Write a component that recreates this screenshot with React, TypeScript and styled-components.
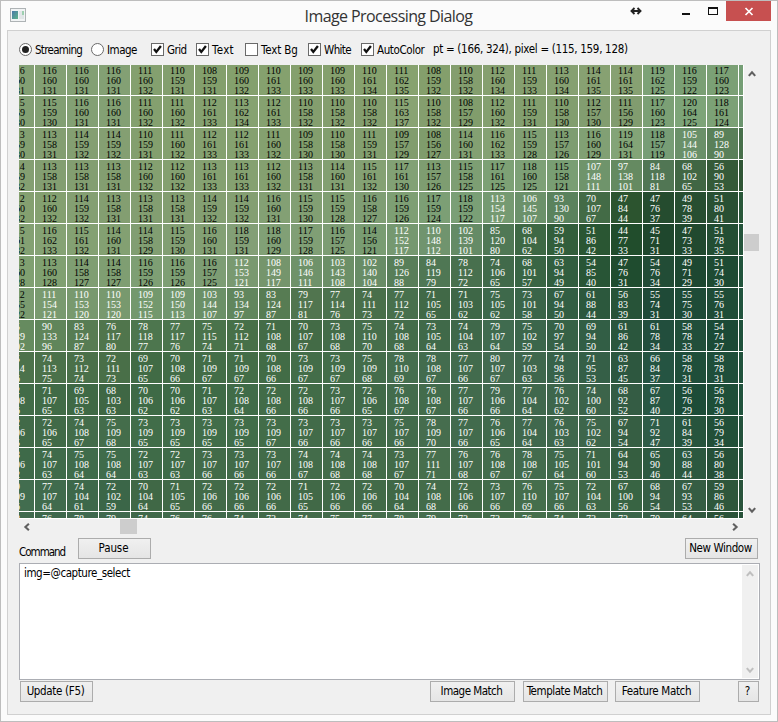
import React from "react";
import styled, { createGlobalStyle } from "styled-components";

const GlobalStyle = createGlobalStyle`
  *, *::before, *::after { box-sizing: border-box; }
  html, body { margin: 0; padding: 0; background: #fbfbfb; }
  svg { display: block; flex: none; }
`;

const Window = styled.div`
  display: flex;
  flex-direction: column;
  width: 778px;
  height: 722px;
  overflow: hidden;
  border: 1px solid #bdbdbd;
  background: #fbfbfb;
  color: #000;
  font: 11.5px/14px "DejaVu Sans Condensed", "DejaVu Sans", sans-serif;
  font-stretch: condensed;
`;

const TitleBar = styled.header`
  display: grid;
  grid-template-columns: 294px 1fr 294px;
  height: 29px;
  flex: none;
`;

const AppIcon = styled.div`
  padding: 7px 0 0 9px;
`;

const Title = styled.h1`
  margin: 0;
  padding: 3px 1px 0 0;
  text-align: center;
  white-space: nowrap;
  color: #333;
  font: 400 16px/24px "Open Sans", sans-serif;
  letter-spacing: -0.58px;
`;

const Controls = styled.div`
  display: flex;
  justify-content: flex-end;
  padding-right: 6px;
`;

const Glyph = styled.div<{ $w: number }>`
  width: ${(p) => p.$w}px;
  height: 20px;
`;

const CloseButton = styled.button`
  width: 45px;
  height: 20px;
  padding: 0;
  border: 0;
  background: #c75050;
`;

const Client = styled.main`
  display: flex;
  flex-direction: column;
  width: 764px;
  height: 685px;
  margin-left: 6px;
  padding-left: 11px;
  border: 1px solid #d0d0d0;
  background: #f0f0f0;
`;

const Options = styled.div`
  display: flex;
  height: 34px;
  flex: none;
  padding-top: 12px;
`;

const Option = styled.label<{ $w: number }>`
  display: flex;
  width: ${(p) => p.$w}px;
  height: 13px;
  gap: 3px;
  white-space: nowrap;
`;

const Radio = styled.span<{ $on?: boolean }>`
  display: flex;
  align-items: center;
  justify-content: center;
  flex: none;
  width: 13px;
  height: 13px;
  border: 1px solid #6a6a6a;
  border-radius: 50%;
  background: #fff;

  &::after {
    content: "";
    width: 7px;
    height: 7px;
    border-radius: 50%;
    background: ${(p) => (p.$on ? "#212121" : "transparent")};
  }
`;

const Box = styled.span`
  flex: none;
  width: 13px;
  height: 13px;
  border: 1px solid #6a6a6a;
  background: #fff;
`;

const Label = styled.span<{ $track?: number }>`
  letter-spacing: ${(p) => p.$track ?? 0}px;
  line-height: 15px;
  white-space: nowrap;
`;

const Readout = styled.output`
  margin-top: -1px;
  line-height: 15px;
  letter-spacing: -0.3px;
  white-space: nowrap;
`;

const Viewer = styled.section`
  display: grid;
  grid-template-columns: 725px 15px;
  grid-template-rows: 454px 15px;
  flex: none;
`;

const PixelGrid = styled.div`
  display: grid;
  grid-template-columns: 15px repeat(22, 31px) 4px;
  grid-template-rows: 30px repeat(13, 31px) 6px;
  gap: 1px;
  width: 725px;
  height: 454px;
  padding: 0 1px 1px 0;
  overflow: hidden;
  background: #fff;
`;

const Pixel = styled.div.attrs<{ $bgr: number[]; $first: boolean; $top: boolean }>((p) => ({
  style: {
    backgroundColor: `rgb(${p.$bgr[2]}, ${p.$bgr[1]}, ${p.$bgr[0]})`,
    color: p.$bgr[1] >= 155 ? "#000" : "#fff",
  },
}))<{ $bgr: number[]; $first: boolean; $top: boolean }>`
  overflow: hidden;
  padding-top: ${(p) => (p.$top ? 1 : 2)}px;
  text-indent: ${(p) => (p.$first ? -9 : 7)}px;
  white-space: pre;
  font: 10px/10px "Liberation Serif", serif;

  span {
    display: block;
  }
`;

const VScroll = styled.div`
  display: flex;
  flex-direction: column;
  justify-content: space-between;
  align-items: center;
  height: 454px;
  padding: 5px 0 5px;
`;

const HScroll = styled.div`
  display: flex;
  justify-content: space-between;
  align-items: center;
  padding: 0 5px 0 4px;
`;

const Thumb = styled.div<{ $vertical?: boolean }>`
  flex: none;
  width: ${(p) => (p.$vertical ? 15 : 17)}px;
  height: ${(p) => (p.$vertical ? 17 : 15)}px;
  background: #cdcdcd;
  margin: ${(p) => (p.$vertical ? "0 0 99px" : "0 505px 0 0")};
`;

const CommandBar = styled.div`
  display: flex;
  width: 739px;
  height: 29px;
  padding-top: 4px;
`;

const CommandLabel = styled.span`
  width: 59px;
  padding-top: 7px;
  letter-spacing: -1px;
`;

const Button = styled.button<{ $w: number; $track?: number }>`
  flex: none;
  width: ${(p) => p.$w}px;
  height: 21px;
  padding: 0 2px 0 0;
  border: 1px solid #acacac;
  background: linear-gradient(#f0f0f0, #e5e5e5);
  color: #000;
  font: inherit;
  line-height: 19px;
  white-space: nowrap;
  letter-spacing: ${(p) => p.$track ?? 0}px;
`;

const Spacer = styled.div`
  flex: 1;
`;

const Editor = styled.div`
  display: flex;
  justify-content: space-between;
  width: 741px;
  height: 117px;
  flex: none;
  padding: 1px;
  border: 1px solid #abadb3;
  background: #fff;
`;

const Script = styled.div`
  padding: 1px 0 0 3px;
  letter-spacing: -0.43px;
`;

const EditorScroll = styled.div`
  display: flex;
  flex-direction: column;
  align-items: center;
  justify-content: space-between;
  width: 16px;
  height: 113px;
  padding: 5px 0 4px;
  background: #f0f0f0;
`;

const Footer = styled.footer`
  display: flex;
  width: 740px;
  padding: 1px 0 0 1px;
`;

const Gap = styled.div<{ $w: number }>`
  width: ${(p) => p.$w}px;
`;

// Each entry holds the blue, green and red channel of one line of pixels.
const channels: [string, string, string][] = [
  ["116 116 116 116 111 110 108 109 110 109 109 110 111 108 110 112 111 113 114 114 119 116 117 117",
   "160 160 160 160 160 159 159 160 161 160 160 161 162 159 158 160 159 160 161 161 162 159 160 158",
   "131 131 131 131 132 131 131 132 133 133 133 134 135 132 132 134 133 134 135 135 125 122 123 117"],
  ["115 115 116 116 111 111 112 113 112 110 110 110 115 110 108 112 111 110 112 111 117 120 118 110",
   "159 159 160 160 160 160 161 162 161 158 158 158 163 158 157 160 159 158 157 156 160 164 161 148",
   "130 130 131 131 132 132 133 134 133 132 132 132 137 132 129 132 131 130 130 129 123 125 124 107"],
  ["113 113 114 114 110 111 112 112 111 109 110 111 109 108 114 116 115 113 116 119 118 105 89 75",
   "159 158 159 159 159 160 161 161 160 158 158 159 157 156 160 162 159 157 160 164 157 144 128 112",
   "130 131 132 132 131 132 133 133 132 130 130 131 129 127 131 133 128 126 129 131 119 106 90 72"],
  ["114 113 113 113 112 112 113 113 112 113 114 115 117 113 115 117 118 115 107 97 84 68 56 54",
   "159 158 158 158 160 160 161 161 160 158 160 161 161 157 158 161 160 158 148 138 118 102 90 86",
   "132 131 131 131 132 132 133 133 132 131 131 132 130 126 125 125 125 121 111 101 81 65 53 48"],
  ["112 112 114 113 113 113 114 114 116 115 115 116 116 117 118 113 106 93 70 47 47 49 51 58",
   "160 160 159 158 158 158 159 159 160 159 159 158 159 159 159 154 145 130 107 84 76 78 80 88",
   "132 132 132 131 131 131 132 132 131 130 128 127 126 124 122 117 107 90 67 44 37 39 41 42"],
  ["115 116 115 114 114 115 116 118 118 117 116 114 112 110 102 85 68 59 51 44 45 47 51 59",
   "161 162 161 160 158 159 160 159 160 159 157 156 152 148 139 120 104 94 86 77 71 73 78 84",
   "132 133 132 131 129 130 131 131 129 128 125 121 117 112 101 80 62 50 42 33 31 33 35 36"],
  ["113 113 114 114 116 116 116 112 108 106 103 102 89 84 78 74 68 63 54 47 54 49 51 60",
   "160 160 158 158 159 159 157 153 149 146 143 140 126 119 112 106 101 94 85 76 76 71 74 84",
   "128 128 127 127 126 126 125 121 117 111 108 104 88 79 72 65 57 49 40 31 34 29 30 34"],
  ["112 111 110 110 109 109 103 93 83 79 77 74 77 71 71 75 73 67 61 56 55 55 55 62",
   "155 154 153 153 152 150 144 134 124 117 114 111 112 105 103 105 101 94 88 83 74 75 76 84",
   "122 121 120 120 115 113 107 97 87 81 76 73 72 65 62 62 58 50 44 39 31 30 31 34"],
  ["95 90 83 76 78 77 75 72 71 70 73 75 74 73 74 79 75 70 69 61 61 58 54 60",
   "139 133 124 117 118 117 115 112 108 107 108 110 108 105 104 107 102 97 94 86 78 78 74 82",
   "102 96 87 80 77 76 74 71 68 67 68 70 68 64 63 64 59 54 50 42 34 33 27 32"],
  ["75 74 73 72 69 70 71 71 70 73 73 75 78 78 77 80 77 74 71 63 66 58 58 61",
   "114 113 112 111 107 108 109 109 108 109 109 109 110 108 107 107 103 98 95 87 84 78 78 83",
   "76 75 74 73 65 66 67 67 66 67 67 68 69 67 66 67 63 56 53 45 37 31 31 34"],
  ["72 71 69 68 70 70 71 72 72 72 73 72 76 76 77 79 77 76 74 68 67 56 56 61",
   "108 107 105 103 106 106 107 108 108 108 107 106 108 108 107 106 104 102 100 92 87 76 78 83",
   "66 65 63 63 62 62 63 64 66 66 66 65 67 67 66 66 64 62 60 52 40 29 30 33"],
  ["72 72 74 75 73 73 73 73 73 73 73 73 75 78 77 76 77 76 75 67 71 61 56 60",
   "106 106 108 109 109 109 109 109 109 107 107 107 107 109 107 106 104 103 102 94 92 84 79 82",
   "65 65 67 68 65 65 65 65 67 66 66 66 66 70 66 65 64 63 62 54 47 39 34 36"],
  ["73 74 75 75 72 72 73 73 73 74 74 74 73 77 76 76 78 75 71 64 65 63 56 60",
   "106 107 108 108 107 107 107 107 107 108 108 108 107 111 107 108 108 105 101 94 90 88 80 82",
   "62 63 64 64 63 63 66 66 66 67 68 68 67 71 68 67 67 64 60 53 46 44 38 38"],
  ["79 77 74 72 70 71 72 72 72 71 72 72 70 74 72 73 76 75 72 67 68 67 59 60",
   "109 107 104 102 104 105 106 106 106 105 106 106 104 108 106 107 110 107 104 100 94 93 86 84",
   "66 64 61 59 64 65 66 66 66 65 66 66 64 68 66 66 69 66 63 56 54 53 46 42"],
  ["78 76 78 79 74 76 76 74 73 74 75 77 78 79 73 73 76 74 73 73 70 64 56 58",
   "106 104 105 106 105 106 106 105 106 107 108 110 110 111 107 108 111 108 104 101 95 90 82 82",
   "64 62 63 64 64 65 65 64 66 67 68 70 69 70 67 67 70 67 63 58 54 50 42 40"],
];

const rows = channels.map((line) => {
  const [b, g, r] = line.map((s) => s.split(" ").map(Number));
  return b.map((_, i) => [b[i], g[i], r[i]]);
});

const chevrons = {
  up: "M0.8 5.9 L4 2.4 L7.2 5.9",
  down: "M0.8 2.1 L4 5.6 L7.2 2.1",
  left: "M5.9 0.8 L2.4 4 L5.9 7.2",
  right: "M2.1 0.8 L5.6 4 L2.1 7.2",
};

function Chevron({ dir, color = "#606060" }: { dir: keyof typeof chevrons; color?: string }) {
  return (
    <svg width="8" height="8" viewBox="0 0 8 8">
      <path d={chevrons[dir]} fill="none" stroke={color} strokeWidth="2.1" />
    </svg>
  );
}

function Check({ label, width, on, track }: { label: string; width: number; on?: boolean; track?: number }) {
  return (
    <Option $w={width}>
      <Box>
        {on && (
          <svg width="11" height="11" viewBox="0 0 11 11">
            <path d="M2 5 L4.3 7.9 L8.9 2" fill="none" stroke="#111" strokeWidth="2.3" />
          </svg>
        )}
      </Box>
      <Label $track={track}>{label}</Label>
    </Option>
  );
}

export default function App() {
  return (
    <>
      <GlobalStyle />
      <Window>
        <TitleBar>
          <AppIcon>
            <svg width="16" height="14" viewBox="0 0 16 14">
              <defs>
                <linearGradient id="pane" x1="0" y1="0" x2="1" y2="1">
                  <stop offset="0" stopColor="#4a78a8" />
                  <stop offset="1" stopColor="#5fb58a" />
                </linearGradient>
              </defs>
              <rect x=".5" y=".5" width="15" height="13" fill="#f2f4f5" stroke="#aeb3b5" />
              <rect x="2" y="3" width="6" height="8" fill="url(#pane)" />
              <rect x="9" y="3" width="3" height="8" fill="#e2e6e8" />
              <rect x="12" y="3" width="2" height="4" fill="#9dd0b0" />
              <rect x="12" y="7" width="2" height="4" fill="#dfe5e6" />
            </svg>
          </AppIcon>
          <Title>Image Processing Dialog</Title>
          <Controls>
            <Glyph $w={51}>
              <svg width="51" height="20" viewBox="0 0 51 20">
                <path
                  d="M9.5 7 L6.5 10 L9.5 13 M12.5 7 L15.5 10 L12.5 13 M6.5 10 H15.5"
                  fill="none"
                  stroke="#222"
                  strokeWidth="1.9"
                />
              </svg>
            </Glyph>
            <Glyph $w={26}>
              <svg width="26" height="20" viewBox="0 0 26 20">
                <rect x="6" y="12" width="8" height="2" fill="#111" />
              </svg>
            </Glyph>
            <Glyph $w={24}>
              <svg width="24" height="20" viewBox="0 0 24 20">
                <path d="M6 6 H16 V14 H6Z M7 8 V13 H15 V8Z" fill="#111" fillRule="evenodd" />
              </svg>
            </Glyph>
            <CloseButton aria-label="Close">
              <svg width="45" height="20" viewBox="0 0 45 20">
                <path d="M19.5 7 L26.5 14 M26.5 7 L19.5 14" stroke="#fff" strokeWidth="1.7" />
              </svg>
            </CloseButton>
          </Controls>
        </TitleBar>
        <Client>
          <Options>
            <Option $w={72}>
              <Radio $on />
              <Label $track={-0.7}>Streaming</Label>
            </Option>
            <Option $w={60}>
              <Radio />
              <Label $track={-0.5}>Image</Label>
            </Option>
            <Check label="Grid" width={45} track={-0.55} on />
            <Check label="Text" width={49} track={0.3} on />
            <Check label="Text Bg" width={63} track={-0.15} />
            <Check label="White" width={53} track={-0.6} on />
            <Check label="AutoColor" width={72} track={-0.4} on />
            <Readout>pt = (166, 324), pixel = (115, 159, 128)</Readout>
          </Options>
          <Viewer>
            <PixelGrid>
              {rows.map((row, y) =>
                row.map((bgr, x) => (
                  <Pixel key={`${y}-${x}`} $bgr={bgr} $first={x === 0} $top={y === 0}>
                    {x < 23 && bgr.slice(0, y === 14 ? 1 : 3).map((v, i) => <span key={i}>{v}</span>)}
                  </Pixel>
                )),
              )}
            </PixelGrid>
            <VScroll>
              <Chevron dir="up" />
              <Thumb $vertical />
              <Chevron dir="down" />
            </VScroll>
            <HScroll>
              <Chevron dir="left" />
              <Thumb />
              <Chevron dir="right" />
            </HScroll>
          </Viewer>
          <CommandBar>
            <CommandLabel>Command</CommandLabel>
            <Button $w={73} $track={-0.1}>Pause</Button>
            <Spacer />
            <Button $w={73} $track={-0.4}>New Window</Button>
          </CommandBar>
          <Editor>
            <Script>img=@capture_select</Script>
            <EditorScroll>
              <Chevron dir="up" color="#bfbfbf" />
              <Chevron dir="down" color="#bfbfbf" />
            </EditorScroll>
          </Editor>
          <Footer>
            <Button $w={73} $track={-0.33}>Update (F5)</Button>
            <Spacer />
            <Button $w={85} $track={-0.5}>Image Match</Button>
            <Gap $w={8} />
            <Button $w={85} $track={-0.45}>Template Match</Button>
            <Gap $w={7} />
            <Button $w={85} $track={-0.35}>Feature Match</Button>
            <Gap $w={38} />
            <Button $w={21}>?</Button>
          </Footer>
        </Client>
      </Window>
    </>
  );
}
